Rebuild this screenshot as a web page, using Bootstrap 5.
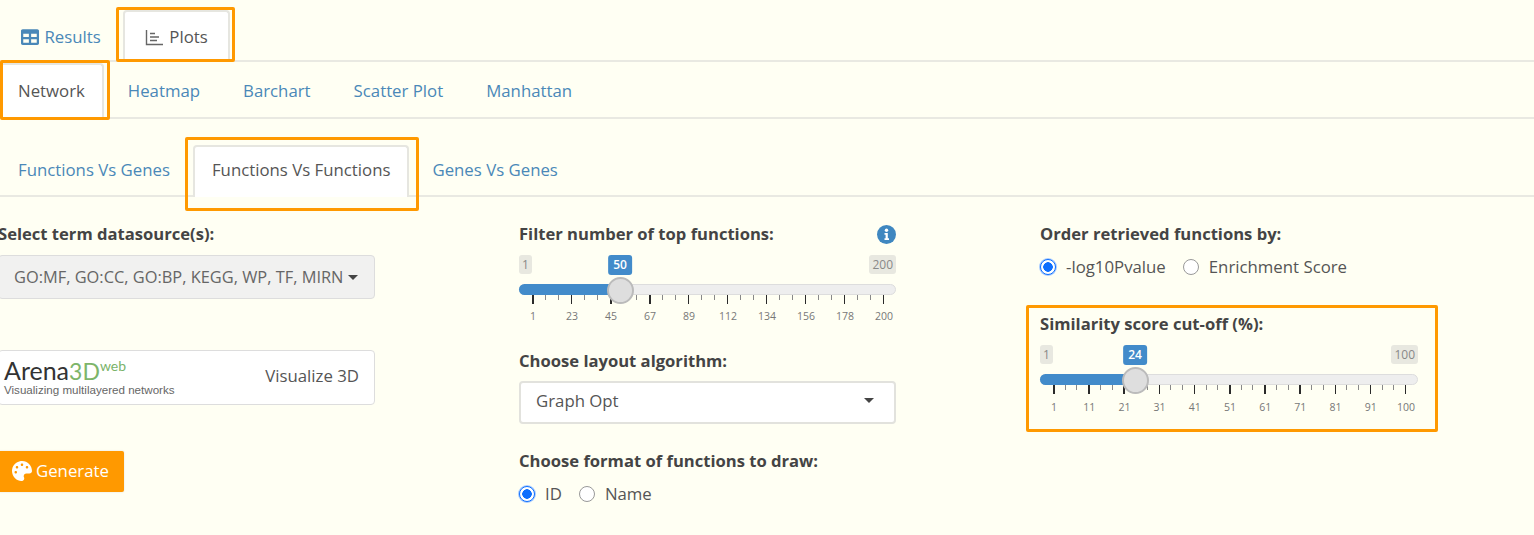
<!DOCTYPE html>
<html lang="en">
<head>
<meta charset="utf-8">
<title>Plots</title>
<link href="https://cdn.jsdelivr.net/npm/bootstrap@5.3.0/dist/css/bootstrap.min.css" rel="stylesheet">
<style>
body{background:#fffff3;font-family:"Open Sans","Noto Sans",sans-serif;font-size:16.8px;color:#555;overflow:hidden;height:535px}
.tabset{border-bottom:2px solid #e9e9e2;margin:0;flex-wrap:nowrap}
.tabset .nav-link{height:52px;display:flex;align-items:center;gap:5.5px;padding:0 17px;margin:0 5px -2px 0;color:#4a88b8;border:2px solid transparent;border-bottom:0;border-radius:4px 4px 0 0;background:none}
.tabset .nav-link.active{background:#fff;color:#555;border-color:#e6e6e0}
.tabs-a{padding-top:10px;margin-left:-1px}
.tabs-a .nav-link{padding:0 20px;margin-right:0}
.tabs-b{margin-left:-1px;padding-top:1px;height:57px}
.tabs-b .nav-link{height:56px;padding:0 17px 2px}
.tabs-c{margin-top:25px;height:53px;padding-top:1px;margin-left:-1px}
.tabs-c .nav-link{padding:0 17px 4px;margin-right:4px}
.hl{position:relative}
.hl::after{content:"";position:absolute;border:3px solid #f90;border-radius:2px;pointer-events:none;z-index:2}
.hl-a::after{inset:-3px -5px -2px -7px}
.hl-b::after{inset:-3px -1px -3px 1px}
.hl-c::after{inset:-8px -6px -16px -8px}
.panes{display:grid;grid-template-columns:377px 377px 378px;column-gap:144px;margin-left:-2px;padding-top:26px}
.lbl{display:block;font-weight:700;color:#444;line-height:22px;height:22px;margin-bottom:10px;white-space:nowrap;font-size:16.6px}
.pane-top{display:flex;justify-content:space-between;align-items:center}
.picker{width:377px;height:44px;background:#f1f1f0;border:1px solid #ddd;border-radius:4px;color:#666;display:flex;align-items:center;padding:0 16px 0 15px;gap:5px;font-size:16.4px}
.picker-txt{overflow:hidden;white-space:nowrap;flex:1;text-align:left}
.caret-mark{width:0;height:0;border-left:5px solid transparent;border-right:5px solid transparent;border-top:5px solid #444;flex:none}
.arena{width:377px;height:55px;background:#fff;border:1px solid #ddd;border-radius:4px;margin-top:51px;display:flex;align-items:center;justify-content:space-between;padding:0 15px 3px 5px;color:#555;font-size:16.8px}
.logo-name{font-family:Lato,sans-serif;font-size:25px;line-height:26px;color:#333;display:block;text-align:left;height:26px;white-space:nowrap}
.logo-name b{font-weight:400;font-size:23px;color:#7db56a}
.logo-name sup{font-size:14px;color:#7ab36a;top:-.6em;font-weight:400}
.logo-sub{font-family:"Liberation Sans",sans-serif;font-size:11.6px;line-height:13px;color:#666;display:block;white-space:nowrap;text-align:left}
.gen{width:126px;height:41px;background:#f90;color:#fff;border:0;border-radius:2px;margin-top:46px;padding:0 0 2px 14px;display:flex;align-items:center;gap:4px;box-shadow:0 0 2px #ddd;font-size:16.8px}
.slide{position:relative;height:70px}
.tag-row{display:flex;justify-content:space-between;height:29px;font-size:12px;line-height:19px}
.tag-row span{background:#e8e8e0;color:#888;padding:0 3px;height:19px;border-radius:3px}
.val-tag{position:absolute;top:0;transform:translateX(-50%);background:#428bca;color:#fff;font-size:12px;font-weight:600;line-height:20px;height:20px;padding:0 5px;border-radius:3px}
.track{position:relative;height:11px;background:#eee;border:1px solid #ddd;border-radius:6px}
.fill{position:absolute;left:-1px;top:-1px;bottom:-1px;background:#428bca;border-radius:6px 0 0 6px}
.knob{position:absolute;top:-8px;width:27px;height:27px;margin-left:-13.5px;border-radius:50%;background:#dedede;border:2px solid #bbb}
.scale{height:9px;margin:0 12px 0 13px;background:
 repeating-linear-gradient(90deg,#2a2a2a 0 1.5px,transparent 1.5px var(--maj)) 0 0/100% 9px no-repeat,
 repeating-linear-gradient(90deg,#888 0 1px,transparent 1px calc(var(--maj)/3)) 0 0/100% 5px no-repeat}
.nums{display:flex;justify-content:space-between;margin:5px 12px 0 14px;font-size:10.5px;line-height:14px;color:#777}
.s24 .nums{margin-top:6px}
.nums span{width:0;display:flex;justify-content:center;white-space:nowrap}
.s50 .scale{--maj:39px}
.s24 .scale{--maj:35.2px}
.dropper{width:377px;height:43px;background:#fff;border:2px solid #e2e2dd;border-radius:4px;display:flex;align-items:center;justify-content:space-between;padding:0 20px 4px 15px;color:#555;font-size:16.8px}
.gap-a{margin-top:25px;margin-bottom:9px}
.gap-b{margin-top:26px}
.choice{display:flex;align-items:center;gap:17px;height:23px;padding-top:1px}
.choice label{display:flex;align-items:center;gap:10px;white-space:nowrap;margin:0}
.choice input.form-check-input{width:16px;height:16px;margin:0;flex:none;background-color:#fff;border:1.5px solid #999}
.choice input.form-check-input:checked{background-image:radial-gradient(circle,#0d6efd 0 4.5px,#fff 5px);background-color:#fff;border-color:#0d6efd;box-shadow:0 0 0 1px #a9ccff}
.boxed{margin:27px -20px 0 -14px;height:127px;border:3px solid #f90;border-radius:2px;padding:5px 17px 0 11px}
</style>
</head>
<body>
<ul class="nav tabset tabs-a">
 <li class="nav-item"><a class="nav-link" href="#"><svg width="18" height="16" viewBox="0 0 512 448"><path fill="#4a88b8" d="M464 0H48C21.500 0 0 21.500 0 48v352c0 26.500 21.500 48 48 48h416c26.500 0 48-21.500 48-48V48c0-26.500-21.500-48-48-48zM224 384H64v-96h160v96zm0-160H64v-96h160v96zm224 160H288v-96h160v96zm0-160H288v-96h160v96z"/></svg>Results</a></li>
 <li class="nav-item hl hl-a"><a class="nav-link active" href="#"><svg width="19" height="17" viewBox="0 0 19 17"><path fill="none" stroke="#666" stroke-width="1.400" d="M1.500 1v14.500H18M5 4.500h5M5 8h9M5 11.500h7"/></svg>Plots</a></li>
</ul>
<ul class="nav tabset tabs-b">
 <li class="nav-item hl hl-b"><a class="nav-link active" href="#">Network</a></li>
 <li class="nav-item"><a class="nav-link" href="#">Heatmap</a></li>
 <li class="nav-item"><a class="nav-link" href="#">Barchart</a></li>
 <li class="nav-item"><a class="nav-link" href="#">Scatter Plot</a></li>
 <li class="nav-item"><a class="nav-link" href="#">Manhattan</a></li>
</ul>
<ul class="nav tabset tabs-c">
 <li class="nav-item"><a class="nav-link" href="#">Functions Vs Genes</a></li>
 <li class="nav-item hl hl-c"><a class="nav-link active" href="#">Functions Vs Functions</a></li>
 <li class="nav-item"><a class="nav-link" href="#">Genes Vs Genes</a></li>
</ul>
<div class="panes">
 <div>
  <span class="lbl">Select term datasource(s):</span>
  <button type="button" class="btn picker"><span class="picker-txt">GO:MF, GO:CC, GO:BP, KEGG, WP, TF, MIRNA, HPA</span><span class="caret-mark"></span></button>
  <button type="button" class="btn arena"><span><span class="logo-name">Arena<b>3D</b><sup>web</sup></span><span class="logo-sub">Visualizing multilayered networks</span></span><span>Visualize 3D</span></button>
  <button type="button" class="btn gen"><svg width="20" height="20" viewBox="0 0 512 512"><path fill="#fff" d="M204.300 5C104.900 24.400 24.800 104.300 5.200 203.400c-37 187 131.700 326.400 258.800 306.700 41.200-6.400 61.400-54.600 42.500-91.700-23.100-45.400 9.900-98.400 60.900-98.400h79.700c35.800 0 64.800-29.600 64.900-65.300C511.500 97.100 368.100-26.900 204.300 5zM96 320c-17.700 0-32-14.300-32-32s14.300-32 32-32 32 14.300 32 32-14.300 32-32 32zm32-128c-17.700 0-32-14.300-32-32s14.300-32 32-32 32 14.300 32 32-14.300 32-32 32zm128-64c-17.700 0-32-14.300-32-32s14.300-32 32-32 32 14.300 32 32-14.300 32-32 32zm128 64c-17.700 0-32-14.300-32-32s14.300-32 32-32 32 14.300 32 32-14.300 32-32 32z"/></svg>Generate</button>
 </div>
 <div>
  <div class="pane-top lbl"><span>Filter number of top functions:</span><svg width="19" height="19" viewBox="0 0 19 19"><circle cx="9.500" cy="9.500" r="9.500" fill="#3f87c0"/><circle cx="9.500" cy="5.200" r="1.700" fill="#fff"/><path fill="#fff" d="M7.500 8h3.300v5.300h1.200V15H7.500v-1.700h1.100V9.700H7.500z"/></svg></div>
  <div class="slide s50">
   <div class="tag-row"><span>1</span><span>200</span></div>
   <div class="val-tag" style="left:101px">50</div>
   <div class="track"><div class="fill" style="width:101px"></div><div class="knob" style="left:100px"></div></div>
   <div class="scale"></div>
   <div class="nums"><span>1</span><span>23</span><span>45</span><span>67</span><span>89</span><span>112</span><span>134</span><span>156</span><span>178</span><span>200</span></div>
  </div>
  <span class="lbl gap-a">Choose layout algorithm:</span>
  <button type="button" class="btn dropper"><span>Graph Opt</span><span class="caret-mark"></span></button>
  <span class="lbl gap-b">Choose format of functions to draw:</span>
  <div class="choice">
   <label><input class="form-check-input" type="radio" name="fmt" checked>ID</label>
   <label><input class="form-check-input" type="radio" name="fmt">Name</label>
  </div>
 </div>
 <div>
  <span class="lbl">Order retrieved functions by:</span>
  <div class="choice">
   <label><input class="form-check-input" type="radio" name="ord" checked>-log10Pvalue</label>
   <label><input class="form-check-input" type="radio" name="ord">Enrichment Score</label>
  </div>
  <div class="boxed">
   <span class="lbl">Similarity score cut-off (%):</span>
   <div class="slide s24">
    <div class="tag-row"><span>1</span><span>100</span></div>
    <div class="val-tag" style="left:95px">24</div>
    <div class="track"><div class="fill" style="width:95px"></div><div class="knob" style="left:94px"></div></div>
    <div class="scale"></div>
    <div class="nums"><span>1</span><span>11</span><span>21</span><span>31</span><span>41</span><span>51</span><span>61</span><span>71</span><span>81</span><span>91</span><span>100</span></div>
   </div>
  </div>
 </div>
</div>
<script src="https://cdn.jsdelivr.net/npm/bootstrap@5.3.0/dist/js/bootstrap.bundle.min.js"></script>
</body>
</html>
